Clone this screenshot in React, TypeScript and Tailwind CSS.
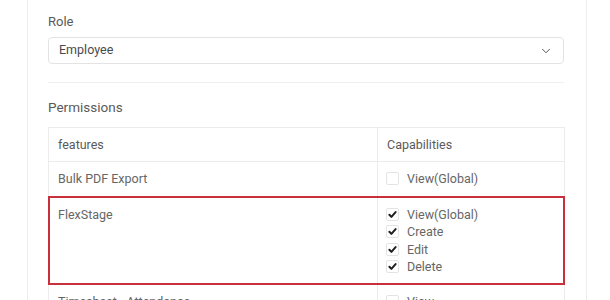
import { ChevronDown } from 'lucide-react'

const Check = ({ checked }: { checked: boolean }) => (
  <span className="w-[13px] h-[13px] shrink-0 rounded-[2px] border border-[#e4e4e4] bg-white flex items-center justify-center">
    {checked && (
      <svg width="11" height="11" viewBox="0 0 12 12">
        <path d="M2.6 6.3 L4.8 8.6 L9.4 3.4" fill="none" stroke="#1f1f1f" strokeWidth="2.2" strokeLinecap="round" strokeLinejoin="round" />
      </svg>
    )}
  </span>
)

const rows = [
  { feature: 'Bulk PDF Export', caps: [{ label: 'View(Global)', checked: false }] },
  {
    feature: 'FlexStage',
    highlight: true,
    caps: [
      { label: 'View(Global)', checked: true },
      { label: 'Create', checked: true },
      { label: 'Edit', checked: true },
      { label: 'Delete', checked: true },
    ],
  },
  { feature: 'Timesheet - Attendance', caps: [{ label: 'View', checked: false }] },
]

export default function App() {
  return (
    <div className="w-[610px] h-[300px] overflow-hidden bg-white" style={{ fontFamily: 'Roboto, "Liberation Sans", sans-serif' }}>
      <div className="ml-[27px] w-[560px] min-h-[300px] border-x border-[#ededed] px-[20px] pt-[13px]">
        <div className="text-[13px] leading-[18px] text-[#5a5a5a]">Role</div>
        <div className="mt-[6px] h-[27px] w-[516px] border border-[#e3e3e3] rounded-[4px] pl-[10px] pr-[10px] flex items-center justify-between text-[12.5px] text-[#4a4a4a]">
          <span>Employee</span>
          <ChevronDown size={14} strokeWidth={1.7} className="text-[#555]" />
        </div>
        <div className="mt-[18px] h-px w-[516px] bg-[#efefef]" />
        <div className="mt-[14px] text-[13.5px] leading-[20px] text-[#5a5a5a]">Permissions</div>

        <div className="mt-[10px] w-[517px] border border-[#ececec] text-[12.5px] leading-[17.5px] text-[#666]">
          <div className="grid grid-cols-[328px_1fr] h-[34px] border-b border-[#ececec]">
            <div className="pl-[9px] flex items-center text-[#5a5a5a]">features</div>
            <div className="pl-[9px] flex items-center border-l border-[#ececec] text-[#5a5a5a]">Capabilities</div>
          </div>
          {rows.map(r => (
            <div key={r.feature} className="relative grid grid-cols-[328px_1fr] border-b border-[#ececec]">
              <div className={`pl-[9px] ${r.highlight ? 'pt-[9px] pb-[8px]' : 'py-[8px]'}`}>{r.feature}</div>
              <div className={`pl-[8px] border-l border-[#ececec] flex flex-col ${r.highlight ? 'pt-[9px] pb-[8px]' : 'py-[8px]'}`}>
                {r.caps.map(c => (
                  <label key={c.label} className="flex items-center gap-[8px]">
                    <Check checked={c.checked} />
                    <span>{c.label}</span>
                  </label>
                ))}
              </div>
              {r.highlight && <div className="absolute -inset-x-px -top-px -bottom-px border-2 border-[#c9303c] pointer-events-none" />}
            </div>
          ))}
        </div>
      </div>
    </div>
  )
}
